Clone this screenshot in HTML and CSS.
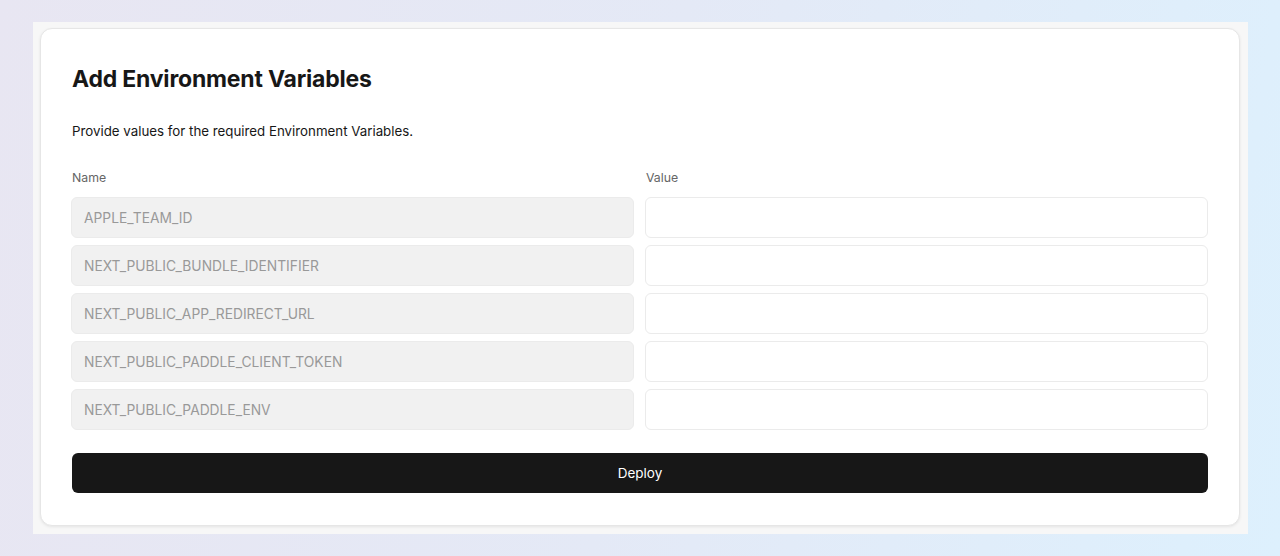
FILE: index.html
```html
<!DOCTYPE html>
<html lang="en">
<head>
    <meta charset="UTF-8">
    <meta name="viewport" content="width=device-width, initial-scale=1.0">
    <title>Add Environment Variables</title>
    <link rel="stylesheet" href="styles.css">
</head>
<body>
    <div class="frame">
        <div class="card">
            <h1>Add Environment Variables</h1>
            <p class="intro">Provide values for the required Environment Variables.</p>
            <div class="vars">
                <span class="label">Name</span>
                <span class="label">Value</span>
                <input class="name" type="text" value="APPLE_TEAM_ID" readonly>
                <input class="value" type="text">
                <input class="name" type="text" value="NEXT_PUBLIC_BUNDLE_IDENTIFIER" readonly>
                <input class="value" type="text">
                <input class="name" type="text" value="NEXT_PUBLIC_APP_REDIRECT_URL" readonly>
                <input class="value" type="text">
                <input class="name" type="text" value="NEXT_PUBLIC_PADDLE_CLIENT_TOKEN" readonly>
                <input class="value" type="text">
                <input class="name" type="text" value="NEXT_PUBLIC_PADDLE_ENV" readonly>
                <input class="value" type="text">
            </div>
            <button class="deploy">Deploy</button>
        </div>
    </div>
</body>
</html>
```

FILE: styles.css
```css
* {
    box-sizing: border-box;
}
body {
    margin: 0;
    height: 556px;
    font-family: Inter, "Noto Sans", sans-serif;
    color: #171717;
    background: linear-gradient(100deg, #e8e6f2 0%, #e4e9f6 50%, #ddf0fd 100%);
    padding: 22px 32px 23px 33px;
}
.frame {
    background-color: #f7f7f7;
    padding: 6px 8px 8px 7px;
}
.card {
    background-color: #fff;
    border: 1px solid #e6e6e6;
    border-radius: 12px;
    box-shadow: 0 1px 3px rgba(0, 0, 0, 0.08);
    padding: 32px 31px 32px 30px;
}
h1 {
    margin: 2px 0 0 1px;
    font-size: 23px;
    line-height: 32px;
    font-weight: 700;
    letter-spacing: -0.2px;
}
.intro {
    margin: 26px 0 0 1px;
    font-size: 13.3px;
    line-height: 20px;
}
.vars {
    display: grid;
    grid-template-columns: 1fr 1fr;
    column-gap: 11px;
    row-gap: 7px;
    margin-top: 28px;
}
.label {
    font-size: 12.3px;
    line-height: 18px;
    color: #666;
    margin: 0 0 3px 1px;
}
.vars input {
    height: 41px;
    border: 1px solid #ebebeb;
    border-radius: 6px;
    padding: 0 12px;
    font-family: inherit;
    font-size: 13.8px;
    outline: none;
}
.name {
    background-color: #f1f1f1;
    color: #999;
}
.value {
    background-color: #fff;
}
.deploy {
    display: block;
    width: calc(100% - 1px);
    height: 40px;
    margin: 23px 0 0 1px;
    border: none;
    border-radius: 6px;
    background-color: #171717;
    color: #fff;
    font-family: inherit;
    font-size: 13.5px;
    font-weight: 400;
    cursor: pointer;
}
```
